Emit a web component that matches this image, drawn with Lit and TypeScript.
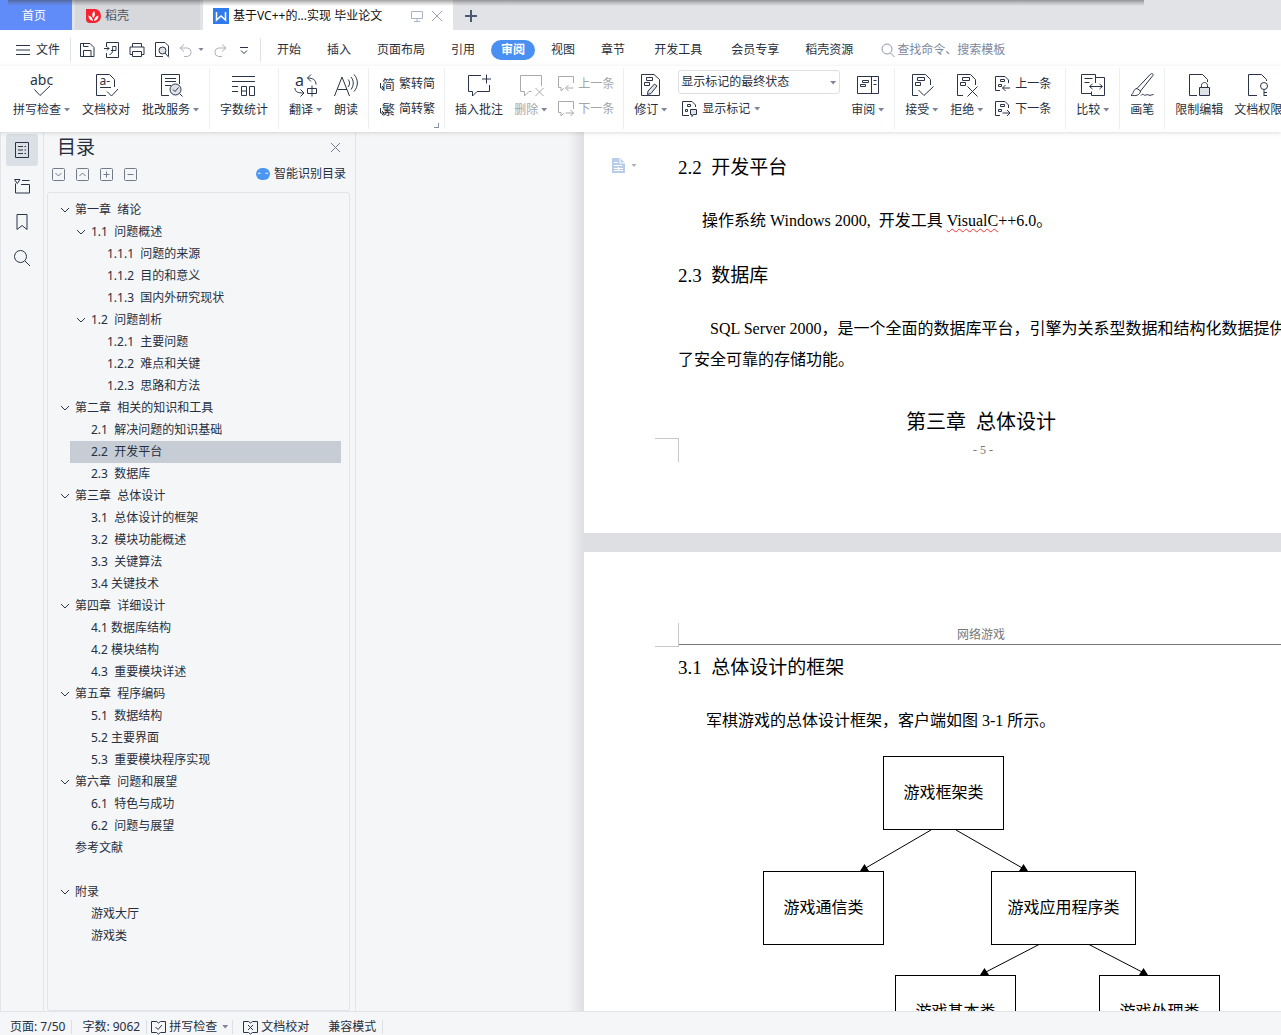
import { LitElement, html, css, svg, nothing, TemplateResult } from "lit";
import { customElement, state } from "lit/decorators.js";
import { classMap } from "lit/directives/class-map.js";

interface TreeNode {
  label: string;
  children?: TreeNode[];
}

const OUTLINE: TreeNode[] = [
  {
    label: "第一章  绪论",
    children: [
      {
        label: "1.1  问题概述",
        children: [{ label: "1.1.1  问题的来源" }, { label: "1.1.2  目的和意义" }, { label: "1.1.3  国内外研究现状" }],
      },
      {
        label: "1.2  问题剖析",
        children: [{ label: "1.2.1  主要问题" }, { label: "1.2.2  难点和关键" }, { label: "1.2.3  思路和方法" }],
      },
    ],
  },
  {
    label: "第二章  相关的知识和工具",
    children: [{ label: "2.1  解决问题的知识基础" }, { label: "2.2  开发平台" }, { label: "2.3  数据库" }],
  },
  {
    label: "第三章  总体设计",
    children: [
      { label: "3.1  总体设计的框架" },
      { label: "3.2  模块功能概述" },
      { label: "3.3  关键算法" },
      { label: "3.4 关键技术" },
    ],
  },
  {
    label: "第四章  详细设计",
    children: [{ label: "4.1 数据库结构" }, { label: "4.2 模块结构" }, { label: "4.3  重要模块详述" }],
  },
  {
    label: "第五章  程序编码",
    children: [{ label: "5.1  数据结构" }, { label: "5.2 主要界面" }, { label: "5.3  重要模块程序实现" }],
  },
  { label: "第六章  问题和展望", children: [{ label: "6.1  特色与成功" }, { label: "6.2  问题与展望" }] },
  { label: "参考文献" },
  { label: "" },
  { label: "附录", children: [{ label: "游戏大厅" }, { label: "游戏类" }] },
];

const MENU = ["开始", "插入", "页面布局", "引用", "审阅", "视图", "章节", "开发工具", "会员专享", "稻壳资源"];

const icon = (w: number, h: number, body: unknown) =>
  html`<svg class="icon" width=${w} height=${h} viewBox="0 0 ${w} ${h}" aria-hidden="true">${body}</svg>`;

const docCut = svg`<path d="M8 22.5H2.5V1.5H15.5L20.5 6.5V12"/><path d="M7.5 4.5h7v3h-7zM5.5 9.5h5v3h-5z"/>`;
const miniDoc = svg`<path d="M5 14.5H.5V.5H10L13.5 4V7"/><path d="M5.5 3.5h4v2h-4zM3.5 8.5h3v2h-3z"/>`;

const ICONS = {
  spell: svg`<text x="0" y="12" font-size="14" class="glyph">abc</text><path d="M4.500 16.500l5.500 6 10-9.500"/>`,
  proof: svg`<path d="M20.500 14V6.500L15.500 1.500H2.500V22.500H12"/><text x="5.500" y="12" font-size="12" class="glyph">a-</text><path d="M6 14.500h11M13 18.500l4.500 4.500 6.500-7"/>`,
  grade: svg`<path d="M20.500 11V1.500H2.500V22.500H10M6 5.500h11M6 8.500h11M6 12.500h6"/><circle cx="16.500" cy="16.500" r="5.500" fill="#dfe3e8"/><path d="M14 16.500l2 2 3.500-4M20.500 20.500l3 3"/>`,
  count: svg`<path d="M0 3.500h23M0 8.500h23M0 13.500h6M0 18.500h6M9.500 13.500h5v9h-5zM9.500 18h5M17.500 13.500h5v9h-5z"/>`,
  translate: svg`<text x="1" y="13" font-size="16" class="glyph">a</text><path d="M22 11.500C22 7 19 5 13.500 5M17 1.500L13.500 5l3.500 3.500M1 15c0 4 3 5 8.500 5M6.500 16.500L10 20l-3.500 3.500M13.500 15.500h9v5h-9zM18 12.500v11"/>`,
  read: svg`<path d="M.5 23L8 4l7.500 19M3.500 16.500h9.500M14 6.500c2 2 2 5 0 7.500M17 4c3 3.500 3 8.500 0 12.500M20 1.500c4.500 5 4.500 12 0 17"/>`,
  comment: svg`<path d="M14 2.500H1.500V18.500H5.500V23L10 18.500H22.500V12M19.500 1.500v9M15 6h9"/>`,
  remove: svg`<path d="M12.500 18.500H10L5.500 23V18.500H1.500V2.500H22.500V13M16.500 15l8 8M24.500 15l-8 8"/>`,
  revise: svg`<path d="M2.500 1.500H15L20.500 6.500V22.500H2.500zM7.500 4.500h6v3h-6zM5.500 9.500h5v3h-5z"/><path d="M15.500 11l2.500 2-6 7.500-3.500 1 .5-3.500z" fill="#dfe3e8"/>`,
  review: svg`<path d="M1.500 3.500h21v17h-21zM15.500 3.500v17M17.500 7.500h3M17.500 11.500h3M6.500 7.500h6v2h-6zM4.500 11.500h5v2h-5z"/>`,
  accept: svg`${docCut}<path d="M8.500 17l5.500 5.500 9.500-9"/>`,
  reject: svg`${docCut}<path d="M12.500 13.500l10 10M22.500 13.500l-10 10"/>`,
  compare: svg`<path d="M14.500 10V1.500H.5V20.500H10.500M3.500 5.500h8M3.500 9.500h5M14.500 4.500h9v18h-13v-4M9 13.500h12M11.500 11l-3 2.500 3 2.500M18.500 11l3 2.500-3 2.500"/>`,
  brush: svg`<path d="M22.500 .8c.8.5.8 1 .4 1.700L10.500 18 7 15.500 20.500 1.200c.6-.6 1.300-.7 2-.4zM7 15.500c-4 .5-3 5-6 6.800 4.500.8 9 .2 9.500-4.300M11 22.500c2-3 3 .8 5-.5s2.500.8 4 .3 2-.3 3.500-.8"/>`,
  lock: svg`<path d="M10 22.500H2.500V1.500H15.500L20.500 6.500V9"/><path d="M14.500 14.500v-2c0-4 6-4 6 0v2"/><path d="M12.500 14.500h10v8h-10z" fill="#dfe3e8"/>`,
  key: svg`<path d="M11 22.500H2.500V1.500H15.500L20.500 6.500V8"/><circle cx="18" cy="13" r="3.500"/><path d="M18 16.500v6.500M18 19.500h3M18 22.500h3"/>`,
  toSimple: svg`<text x="3" y="13" font-size="13" class="glyph">简</text><path d="M1.500 7v5h3M3 10l2 2-2 2"/>`,
  toTrad: svg`<text x="3" y="13" font-size="13" class="glyph">繁</text><path d="M1.500 7v5h3M3 10l2 2-2 2"/>`,
  prevComment: svg`<path d="M15.500 7V.5H.5V11.500H3V15L6 12M15.500 12H8M10.500 9L7.500 12l3 3"/>`,
  nextComment: svg`<path d="M15.500 8V.5H.5V11.500H3V15L6 12M7.500 12h8M12.500 9l3 3-3 3"/>`,
  prevChange: svg`${miniDoc}<path d="M15 12H7.500M10.500 9L7.500 12l3 3"/>`,
  nextChange: svg`${miniDoc}<path d="M7.500 12H15M12 9l3 3-3 3"/>`,
  marks: svg`<path d="M7 14.500H.5V.5H10L13.500 4V6M5.500 3.500h3v2h-3zM3.500 8.500h2v2h-2z"/><path d="M8.500 8.500h6v5h-3l-1.500 2v-2H8.500z" fill="#dfe3e8"/>`,
};

@customElement("app-root")
export class AppRoot extends LitElement {
  @state() private selected = "2.2  开发平台";
  @state() private closed: string[] = [];
  @state() private activeMenu = "审阅";

  static styles = css`
    :host {
      display: flex;
      flex-direction: column;
      height: 100vh;
      overflow: hidden;
      background: #f5f6f8;
      color: #262f40;
      font: 12px/16px "Noto Sans", "Noto Sans CJK SC", sans-serif;
    }
    * { box-sizing: border-box; }
    button, select, input { font: inherit; color: inherit; margin: 0; padding: 0; border: 0; background: none; }
    button { cursor: pointer; white-space: nowrap; }
    a { color: inherit; text-decoration: none; }
    ul { list-style: none; margin: 0; padding: 0; }
    .icon { display: block; flex: none; fill: none; stroke: #2b3446; overflow: visible; }
    .glyph { fill: #2b3446; stroke: none; }
    .caret { flex: none; width: 6px; height: 4px; background: #7c869b; clip-path: polygon(0 0, 100% 0, 50% 90%); }

    .tabs { position: relative; display: flex; flex: none; height: 30px; background: #e2e3e7; }
    .tabs::after {
      content: ""; position: absolute; top: 0; left: 8px; right: 137px; height: 6px; pointer-events: none;
      background: linear-gradient(rgba(70, 70, 72, 0.5), rgba(90, 90, 92, 0.25) 50%, rgba(90, 90, 92, 0));
    }
    .tab { display: flex; align-items: center; flex: none; gap: 4px; padding-top: 2px; }
    .home { width: 72px; justify-content: center; padding-right: 4px; background: #5f8cf8; color: #fff; margin-right: 3px; }
    .docer { width: 125px; padding-left: 11px; background: #d7d8db; color: #4c5362; margin-right: 3px; }
    .current { width: 250px; padding: 2px 10px 0; background: #fff; color: #111; }
    .current a { flex: 1; }
    .current button + button { margin-left: 4px; }
    .new { padding-left: 11px; }

    .menubar { display: flex; flex: none; align-items: center; height: 36px; padding: 3px 16px 0; background: #fff; white-space: nowrap; }
    .file { display: flex; align-items: center; gap: 6px; padding-right: 10px; border-right: 1px solid #dfe2e8; height: 24px; margin-right: 8px; }
    .quick { display: flex; align-items: center; gap: 9px; height: 24px; padding-right: 8px; border-right: 1px solid #dfe2e8; }
    .quick .undo { display: flex; align-items: center; gap: 5px; }
    .menu { display: flex; align-items: center; padding-left: 3px; }
    .menu button { height: 20px; padding: 0 13px; }
    .menu .wide { padding: 0 16px; }
    .menu .on { margin: 0 3px; padding: 0 10px; border-radius: 10px; background: #4a90f2; color: #fff; font-weight: 700; }
    .find { display: flex; align-items: center; gap: 2px; padding-left: 15px; }
    .find input { width: 180px; outline: none; }
    .find input::placeholder { color: #7d879c; opacity: 1; }

    .ribbon {
      position: relative; z-index: 2; display: flex; flex: none; height: 66px; padding: 2px 0 3px 3px;
      background: #fff; box-shadow: 0 1px 4px rgba(0, 0, 0, 0.14); overflow: clip; overflow-clip-margin: 8px;
    }
    .group { position: relative; display: flex; flex: none; gap: 12px; padding: 0 10px; border-right: 1px solid #eceef1; }
    .group:last-child { border-right: 0; }
    .close { gap: 11px; }
    .snug { gap: 11px; padding-right: 9px; }
    .roomy { padding-right: 14px; }
    .tool { display: flex; flex-direction: column; align-items: center; gap: 5px; padding-top: 5px; height: 61px; }
    .name { display: flex; align-items: center; gap: 3px; }
    .pair { display: flex; flex-direction: column; align-items: flex-start; gap: 9px; padding-top: 8px; }
    .small { display: flex; align-items: center; gap: 4px; height: 16px; }
    .dim { color: #a3a5a9; }
    .dim .icon { stroke: #a8aaae; }
    .marks { display: flex; flex-direction: column; gap: 7px; padding-top: 2px; }
    .marks .small { padding-left: 4px; }
    .picker { position: relative; display: block; }
    .picker select { display: block; appearance: none; width: 162px; height: 24px; padding: 0 16px 0 2px; border: 1px solid #dcdfe5; border-radius: 3px; background: #fff; }
    .picker .caret { position: absolute; right: 4px; top: 11px; }
    .launcher { position: absolute; right: 5px; bottom: 1px; width: 5px; height: 5px; border: solid #8790a4; border-width: 0 1px 1px 0; }

    .work { display: flex; flex: 1; min-height: 0; }
    .rail { display: flex; flex-direction: column; flex: none; align-items: center; gap: 4px; width: 44px; padding-top: 2px; border: solid #e2e4ea; border-width: 0 1px; }
    .rail button { display: grid; place-items: center; width: 32px; height: 32px; border-radius: 3px; }
    .rail .on { background: #dbdfe6; }
    .panel { display: flex; flex-direction: column; flex: none; width: 312px; padding: 0 5px 0 3px; border-right: 1px solid #e2e4ea; }
    .panel-top { display: flex; align-items: center; justify-content: space-between; height: 30px; padding: 0 9px 0 10px; }
    .panel-top h2 { margin: 0; font-size: 19px; line-height: 30px; font-weight: 400; }
    .panel-tools { display: flex; align-items: center; gap: 11px; height: 24px; margin-bottom: 6px; padding: 0 4px 0 5px; }
    .smart { display: flex; align-items: center; gap: 4px; margin-left: auto; }
    .outline { flex: 1; min-height: 0; overflow: hidden; padding: 6px 8px 0 6px; border: 1px solid #e2e4ea; border-radius: 3px; }
    .outline ul ul { padding-left: 16px; }
    .row { display: flex; align-items: center; gap: 5px; width: 100%; height: 22px; padding-left: 6px; white-space: pre; text-align: left; }
    .row.on { background: #c6cdd5; }
    .slot { flex: none; width: 10px; }

    .canvas { flex: 1; min-width: 0; overflow: hidden; padding-left: 212px; }
    .pages { display: flex; flex-direction: column; gap: 19px; width: max-content; padding-left: 16px; background: linear-gradient(to right, #f5f6f8, #dedfe2 16px); }
    .page { position: relative; width: 794px; padding: 0 94px; background: #fff; color: #000; font-family: "Liberation Serif", "Noto Sans CJK SC", serif; white-space: pre; }
    .first { padding-top: 19px; padding-bottom: 76px; }
    .page h3 { margin: 0 0 20px; font-size: 19px; line-height: 34px; font-weight: 400; }
    .page p { margin: 0 0 23px; font-size: 16px; line-height: 31px; text-indent: 32px; }
    .page .near { text-indent: 24px; }
    .page .mid { margin: 0; text-indent: 28px; }
    .page h2 { margin: 31px 0 5px; font-size: 20px; line-height: 32px; font-weight: 400; text-align: center; }
    .typo { text-decoration: underline wavy #e33 1px; text-underline-offset: 2px; }
    .folio { font-size: 12px; line-height: 14px; color: #777; text-align: center; padding-left: 4px; }
    .runner { padding-top: 75px; margin-bottom: 6px; border-bottom: 1px solid #777; font-size: 12px; line-height: 17px; color: #777; text-align: center; }
    .corner { position: absolute; left: 71px; width: 24px; height: 24px; border: solid #c8c8c8; border-width: 1px 1px 0 0; }
    .corner.low { top: 306px; }
    .corner.high { top: 71px; border-width: 0 1px 1px 0; }
    .para-mark { position: absolute; left: 28px; top: 26px; display: flex; align-items: center; gap: 6px; }
    .para-mark .caret { background: #adb0b5; }
    .chart { position: relative; height: 400px; }
    .chart svg { position: absolute; left: 0; top: 0; overflow: visible; }
    .node { position: absolute; display: grid; place-items: center; height: 74px; width: 121px; border: 1px solid #000; background: #fff; font-size: 16px; }
    .n1 { left: 205px; top: 20px; }
    .n2 { left: 85px; top: 135px; }
    .n3 { left: 313px; top: 135px; width: 145px; }
    .n4 { left: 217px; top: 239px; }
    .n5 { left: 421px; top: 239px; }

    .status { position: relative; z-index: 1; display: flex; flex: none; align-items: center; height: 24px; padding-top: 7px; border-top: 1px solid #e2e4ea; background: #f5f6f8; white-space: nowrap; }
    .cell { display: flex; align-items: center; gap: 3px; height: 14px; padding: 0 6px 0 10px; border-right: 1px solid #dcdfe5; }
    .cell.flat { border-right: 0; padding-right: 9px; }
    .cell.check { padding: 0 4px; }
    .cell.check .caret { margin-left: 2px; }
  `;

  private tool(label: string, art: unknown, opts: { menu?: boolean; dim?: boolean } = {}): TemplateResult {
    return html`<button class=${classMap({ tool: true, dim: !!opts.dim })}>
      ${icon(24, 24, art)}
      <span class="name">${label}${opts.menu ? html`<i class="caret"></i>` : nothing}</span>
    </button>`;
  }

  private small(label: string, art: unknown, dim = false, menu = false): TemplateResult {
    return html`<button class=${classMap({ small: true, dim })}>
      ${icon(16, 16, art)}<span>${label}</span>${menu ? html`<i class="caret"></i>` : nothing}
    </button>`;
  }

  private pick(node: TreeNode) {
    if (node.children) {
      this.closed = this.closed.includes(node.label)
        ? this.closed.filter((l) => l !== node.label)
        : [...this.closed, node.label];
    } else {
      this.selected = node.label;
    }
  }

  private tree(nodes: TreeNode[]): TemplateResult {
    return html`<ul>
      ${nodes.map((n) => {
        if (!n.label) return html`<li class="row"></li>`;
        const open = !this.closed.includes(n.label);
        return html`<li>
          <button class=${classMap({ row: true, on: n.label === this.selected })} @click=${() => this.pick(n)}>
            <span class="slot">${n.children ? icon(10, 10, open ? svg`<path d="M1 3l4 4 4-4"/>` : svg`<path d="M3 1l4 4-4 4"/>`) : nothing}</span><span>${n.label}</span>
          </button>
          ${n.children && open ? this.tree(n.children) : nothing}
        </li>`;
      })}
    </ul>`;
  }

  private tabs() {
    return html`<nav class="tabs" aria-label="文档标签">
      <a class="tab home" href="#home">首页</a>
      <a class="tab docer" href="#docer">
        ${icon(15, 16, svg`<path d="M0 1h9a6 7 0 0 1 6 7 6.500 7 0 0 1-6 7H4a4 4 0 0 1-4-4z" fill="#f5222f" stroke="none"/><path d="M7 13C3 12 2.500 9.500 2.500 7.500 5 8 6.500 10 7 13zM7.200 10C5.500 7.500 6.200 5 8 3c1.500 2.500 1.200 5-.8 7zM8.200 13c0-3 1.500-5 4.300-5.500 0 3-1.500 5-4.300 5.500z" fill="#fff" stroke="none"/>`)}稻壳
      </a>
      <div class="tab current">
        ${icon(16, 16, svg`<path d="M0 0h16v16H0z" fill="#2f7bee" stroke="none"/><path d="M3.500 4v8l4.500-4 4.500 4V4" stroke="#fff" stroke-width="1.500"/>`)}
        <a href="#doc">基于VC++的...实现 毕业论文</a>
        <button aria-label="窗口">${icon(12, 12, svg`<path d="M.5 1.500h11v7H.5zM6 8.500v3M3 11.500h6" stroke="#aab2c6"/>`)}</button>
        <button aria-label="关闭">${icon(12, 12, svg`<path d="M1 1l10 10M11 1L1 11" stroke="#9aa3b8"/>`)}</button>
      </div>
      <button class="tab new" aria-label="新建">${icon(14, 14, svg`<path d="M7 1v12M1 7h12" stroke="#4c5870" stroke-width="2"/>`)}</button>
    </nav>`;
  }

  private menubar() {
    return html`<div class="menubar">
      <button class="file">${icon(14, 12, svg`<path d="M0 1.500h14M0 6h14M0 10.500h14"/>`)}文件</button>
      <div class="quick">
        <button aria-label="保存">${icon(16, 16, svg`<path d="M1.500 1.500H11l4 4v9H1.500zM4.500 14.500V8.500h7.500v6M4.500 1.500v3h5"/>`)}</button>
        <button aria-label="输出为PDF">${icon(16, 16, svg`<path d="M2.500 5V.5h12v15h-12V11M0 6.500h5M3 4.500l2 2-2 2M5.500 12.500c4-1 3-5 3-8h3.500v4H7"/>`)}</button>
        <button aria-label="打印">${icon(16, 16, svg`<path d="M3.500 5V1.500h9V5M3.500 12.500h-2.500v-7.500h14v7.500h-2.500M3.500 9.500h9v5h-9z"/>`)}</button>
        <button aria-label="打印预览">${icon(16, 16, svg`<path d="M9 14.500H1.500V.5H11l3.500 3.500V14"/><circle cx="8.500" cy="8.500" r="3.500" fill="#dfe3e8"/><path d="M11 11l4 4.500"/>`)}</button>
        <span class="undo">
          <button aria-label="撤销">${icon(14, 14, svg`<path d="M5 1.500L1 5l4 3.500M1 5h7.500a4.300 4.300 0 0 1 0 8.500H5" stroke="#aeb1b7"/>`)}</button>
          <i class="caret"></i>
        </span>
        <button aria-label="恢复">${icon(14, 14, svg`<path d="M9 1.500L13 5 9 8.500M13 5H5.500a4.300 4.300 0 0 0 0 8.500H9" stroke="#aeb1b7"/>`)}</button>
        <button aria-label="更多">${icon(16, 12, svg`<path d="M4 3.500h8M5 6.500l3 3 3-3"/>`)}</button>
      </div>
      <nav class="menu">
        ${MENU.map(
          (m) => html`<button class=${classMap({ on: m === this.activeMenu, wide: m === "开发工具" })} @click=${() => (this.activeMenu = m)}>${m}</button>`
        )}
      </nav>
      <label class="find">
        ${icon(14, 14, svg`<circle cx="6" cy="6" r="5" stroke="#8f98ab"/><path d="M9.500 10l4 4" stroke="#8f98ab"/>`)}
        <input type="search" aria-label="查找" placeholder="查找命令、搜索模板" />
      </label>
    </div>`;
  }

  private ribbon() {
    return html`<div class="ribbon">
      <div class="group">
        ${this.tool("拼写检查", ICONS.spell, { menu: true })}${this.tool("文档校对", ICONS.proof)}${this.tool("批改服务", ICONS.grade, { menu: true })}
      </div>
      <div class="group">${this.tool("字数统计", ICONS.count)}</div>
      <div class="group">${this.tool("翻译", ICONS.translate, { menu: true })}${this.tool("朗读", ICONS.read)}</div>
      <div class="group snug">
        <div class="pair">${this.small("繁转简", ICONS.toSimple)}${this.small("简转繁", ICONS.toTrad)}</div>
        <i class="launcher"></i>
      </div>
      <div class="group snug">
        ${this.tool("插入批注", ICONS.comment)}${this.tool("删除", ICONS.remove, { menu: true, dim: true })}
        <div class="pair">${this.small("上一条", ICONS.prevComment, true)}${this.small("下一条", ICONS.nextComment, true)}</div>
      </div>
      <div class="group close">
        ${this.tool("修订", ICONS.revise, { menu: true })}
        <div class="marks">
          <label class="picker">
            <select aria-label="显示状态"><option>显示标记的最终状态</option></select>
            <i class="caret"></i>
          </label>
          ${this.small("显示标记", ICONS.marks, false, true)}
        </div>
        ${this.tool("审阅", ICONS.review, { menu: true })}
      </div>
      <div class="group roomy">
        ${this.tool("接受", ICONS.accept, { menu: true })}${this.tool("拒绝", ICONS.reject, { menu: true })}
        <div class="pair">${this.small("上一条", ICONS.prevChange)}${this.small("下一条", ICONS.nextChange)}</div>
      </div>
      <div class="group">${this.tool("比较", ICONS.compare, { menu: true })}</div>
      <div class="group">${this.tool("画笔", ICONS.brush)}</div>
      <div class="group snug">${this.tool("限制编辑", ICONS.lock)}${this.tool("文档权限", ICONS.key)}</div>
    </div>`;
  }

  private sidebar() {
    const box = (d: unknown) => icon(13, 13, svg`<rect x=".5" y=".5" width="12" height="12" rx="1" stroke="#737b8a"/>${d}`);
    return html`
      <nav class="rail" aria-label="侧边栏">
        <button class="on" aria-label="目录">${icon(16, 18, svg`<path d="M1.500 1.500h13v15h-13zM4 5.500h5M10.500 5.500H12M4 9h5M10.500 9H12M4 12.500h5M10.500 12.500H12"/>`)}</button>
        <button aria-label="章节">${icon(16, 16, svg`<path d="M.5 1.500h5.500l-2.700 4zM8 2.500h7.500M1.500 5.500v9.500h14V6.500H7"/>`)}</button>
        <button aria-label="书签">${icon(12, 18, svg`<path d="M1 1.500h10v15l-5-4-5 4z"/>`)}</button>
        <button aria-label="查找">${icon(18, 18, svg`<circle cx="7.500" cy="7.500" r="6"/><path d="M12 12l5 5"/>`)}</button>
      </nav>
      <section class="panel">
        <div class="panel-top">
          <h2>目录</h2>
          <button aria-label="关闭目录">${icon(11, 11, svg`<path d="M1 1l9 9M10 1l-9 9" stroke="#737b8a"/>`)}</button>
        </div>
        <div class="panel-tools">
          <button aria-label="展开">${box(svg`<path d="M3.500 5l3 3 3-3" stroke="#737b8a"/>`)}</button>
          <button aria-label="收起">${box(svg`<path d="M3.500 8l3-3 3 3" stroke="#737b8a"/>`)}</button>
          <button aria-label="升级">${box(svg`<path d="M3.500 6.500h6M6.500 3.500v6" stroke="#737b8a"/>`)}</button>
          <button aria-label="降级">${box(svg`<path d="M3.500 6.500h6" stroke="#737b8a"/>`)}</button>
          <button class="smart">
            ${icon(14, 12, svg`<rect width="14" height="12" rx="6" fill="#4b96f3" stroke="none"/><path d="M2 6c.5-1.500 2-1.500 2.500 0M9.500 6c.5-1.500 2-1.500 2.500 0" stroke="#fff"/>`)}智能识别目录
          </button>
        </div>
        <div class="outline">${this.tree(OUTLINE)}</div>
      </section>`;
  }

  private pages() {
    return html`<main class="canvas"><div class="pages">
      <article class="page first"><button class="para-mark" aria-label="段落布局">${icon(13, 15, svg`<path d="M0 0h8l5 5v10H0z" fill="#b9cdea" stroke="none"/><path d="M8 0v5h5" stroke="#fff"/><path d="M2 4.500h4M2 7.500h8M2 10.500h9M2 12.500h9M6.500 9v4" stroke="#fff"/>`)}<i class="caret"></i></button><i class="corner low"></i><h3>2.2  开发平台</h3><p class="near">操作系统 Windows 2000,  开发工具 <span class="typo">VisualC</span>++6.0。</p><h3>2.3  数据库</h3><p>SQL Server 2000，是一个全面的数据库平台，引擎为关系型数据和结构化数据提供<br>了安全可靠的存储功能。</p><h2>第三章  总体设计</h2><div class="folio">- 5 -</div></article>
      <article class="page"><i class="corner high"></i><div class="runner">网络游戏</div><h3>3.1  总体设计的框架</h3><p class="mid">军棋游戏的总体设计框架，客户端如图 3-1 所示。</p><div class="chart"><svg width="606" height="320" aria-hidden="true"><path d="M253 94L186 133M278 94L346 133M362 208L306 237M410 208L466 237" fill="none" stroke="#000"/><path d="M182 135l4.500-7 4.500 7zM350 135l-4.500-7-4.500 7zM302 239l4.500-7 4.500 7zM470 239l-4.500-7-4.500 7z"/></svg><div class="node n1">游戏框架类</div><div class="node n2">游戏通信类</div><div class="node n3">游戏应用程序类</div><div class="node n4">游戏基本类</div><div class="node n5">游戏处理类</div></div></article>
    </div></main>`;
  }

  private status() {
    const book = (d: unknown) => icon(15, 14, svg`<path d="M5.500 1.500H.5v11h5l2 1.500 2-1.500h5v-11h-5L7.500 3z"/>${d}`);
    return html`<footer class="status">
      <span class="cell">页面: 7/50</span>
      <span class="cell">字数: 9062</span>
      <button class="cell check">${book(svg`<path d="M4.500 7l2.500 2.500 4-4.500"/>`)}拼写检查<i class="caret"></i></button>
      <button class="cell flat">${book(svg`<path d="M5 5l5 5M10 5l-5 5"/>`)}文档校对</button>
      <button class="cell">兼容模式</button>
    </footer>`;
  }

  render() {
    return html`${this.tabs()}${this.menubar()}${this.ribbon()}
      <div class="work">${this.sidebar()}${this.pages()}</div>
      ${this.status()}`;
  }
}
